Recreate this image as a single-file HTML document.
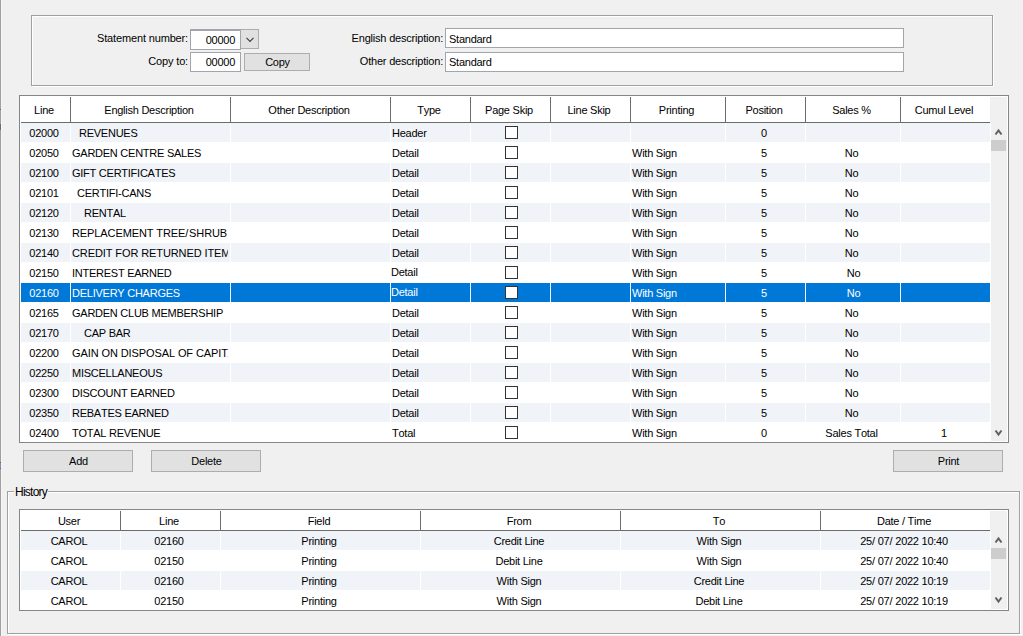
<!DOCTYPE html>
<html><head><meta charset="utf-8"><style>
html,body{margin:0;padding:0}
body{width:1023px;height:636px;overflow:hidden;position:relative;background:#f0f0f0;font-family:"Liberation Sans",sans-serif;font-size:11px}
.t{position:absolute;white-space:nowrap;line-height:13px;letter-spacing:-0.25px;font-kerning:none}
.g{display:inline-block;width:3px}
</style></head><body>
<div style="position:absolute;left:0px;top:0px;width:1px;height:636px;background:#a0a0a0"></div>
<div style="position:absolute;left:1px;top:0px;width:1px;height:636px;background:#f6f6f6"></div>
<div style="position:absolute;left:0px;top:109px;width:1px;height:1px;background:#3d6fae"></div>
<div style="position:absolute;left:0px;top:124px;width:1px;height:6px;background:#7a6274"></div>
<div style="position:absolute;left:0px;top:462px;width:1px;height:1px;background:#8a5050"></div>
<div style="position:absolute;left:0px;top:463px;width:1px;height:5px;background:#6f94b4"></div>
<div style="position:absolute;left:0px;top:468px;width:1px;height:1px;background:#8a5050"></div>
<div style="position:absolute;left:32px;top:16px;width:962px;height:71px;box-sizing:border-box;border:1px solid #fff"></div>
<div style="position:absolute;left:31px;top:15px;width:962px;height:71px;box-sizing:border-box;border:1px solid #a0a0a0"></div>
<div class="t" style="left:-112px;width:300px;text-align:right;top:32px;color:#000;letter-spacing:-0.15px">Statement number:</div>
<div class="t" style="left:-112px;width:300px;text-align:right;top:55px;color:#000;letter-spacing:-0.15px">Copy to:</div>
<div style="position:absolute;left:190px;top:29px;width:69px;height:20px;box-sizing:border-box;border:1px solid #adadad;background:#e1e1e1"></div>
<div style="position:absolute;left:190px;top:29px;width:51px;height:21px;box-sizing:border-box;border:1px solid #a2a5ab;border-top-width:2px;background:#fff"></div>
<div class="t" style="left:-65px;width:300px;text-align:right;top:34px;color:#000;">00000</div>
<svg style="position:absolute;left:241px;top:29px" width="18" height="20"><path d="M5.5 8.8 L9 12.3 L12.5 8.8" fill="none" stroke="#404040" stroke-width="1.2"/></svg>
<div style="position:absolute;left:190px;top:52px;width:51px;height:20px;box-sizing:border-box;border:1px solid #a2a5ab;background:#fff"></div>
<div class="t" style="left:-65px;width:300px;text-align:right;top:56px;color:#000;">00000</div>
<div style="position:absolute;left:244px;top:53px;width:66px;height:18px;box-sizing:border-box;border:1px solid #adadad;background:#e1e1e1"></div>
<div class="t" style="left:244.5px;width:66px;text-align:center;top:56px;color:#000;">Copy</div>
<div class="t" style="left:143px;width:300px;text-align:right;top:32px;color:#000;letter-spacing:-0.2px">English description:</div>
<div class="t" style="left:143px;width:300px;text-align:right;top:55px;color:#000;letter-spacing:-0.2px">Other description:</div>
<div style="position:absolute;left:445px;top:28px;width:459px;height:20px;box-sizing:border-box;border:1px solid #a2a5ab;background:#fff"></div>
<div class="t" style="left:449px;top:33px;color:#000;">Standard</div>
<div style="position:absolute;left:445px;top:52px;width:459px;height:20px;box-sizing:border-box;border:1px solid #a2a5ab;background:#fff"></div>
<div class="t" style="left:449px;top:56px;color:#000;">Standard</div>
<div style="position:absolute;left:19px;top:95px;width:990px;height:348px;box-sizing:border-box;border:1px solid #858585;background:#fff"></div>
<div style="position:absolute;left:990px;top:97px;width:17px;height:26px;background:#f0f0f0"></div>
<div style="position:absolute;left:991px;top:123px;width:16px;height:318px;background:#f0f0f0"></div>
<div style="position:absolute;left:70px;top:97px;width:1px;height:26px;background:#6d6d6d"></div>
<div class="t" style="left:19.5px;width:49px;text-align:center;top:104px;color:#000;">Line</div>
<div style="position:absolute;left:230px;top:97px;width:1px;height:26px;background:#6d6d6d"></div>
<div class="t" style="left:69.5px;width:159px;text-align:center;top:104px;color:#000;">English Description</div>
<div style="position:absolute;left:390px;top:97px;width:1px;height:26px;background:#6d6d6d"></div>
<div class="t" style="left:229.5px;width:159px;text-align:center;top:104px;color:#000;">Other Description</div>
<div style="position:absolute;left:470px;top:97px;width:1px;height:26px;background:#6d6d6d"></div>
<div class="t" style="left:389.5px;width:79px;text-align:center;top:104px;color:#000;">Type</div>
<div style="position:absolute;left:550px;top:97px;width:1px;height:26px;background:#6d6d6d"></div>
<div class="t" style="left:469.5px;width:79px;text-align:center;top:104px;color:#000;">Page Skip</div>
<div style="position:absolute;left:630px;top:97px;width:1px;height:26px;background:#6d6d6d"></div>
<div class="t" style="left:549.5px;width:79px;text-align:center;top:104px;color:#000;">Line Skip</div>
<div style="position:absolute;left:725px;top:97px;width:1px;height:26px;background:#6d6d6d"></div>
<div class="t" style="left:629.5px;width:94px;text-align:center;top:104px;color:#000;">Printing</div>
<div style="position:absolute;left:805px;top:97px;width:1px;height:26px;background:#6d6d6d"></div>
<div class="t" style="left:724.5px;width:79px;text-align:center;top:104px;color:#000;">Position</div>
<div style="position:absolute;left:900px;top:97px;width:1px;height:26px;background:#6d6d6d"></div>
<div class="t" style="left:804.5px;width:94px;text-align:center;top:104px;color:#000;">Sales %</div>
<div class="t" style="left:899.5px;width:89px;text-align:center;top:104px;color:#000;">Cumul Level</div>
<div style="position:absolute;left:21px;top:122px;width:969px;height:1px;background:#6d6d6d"></div>
<div style="position:absolute;left:21px;top:123px;width:49px;height:19px;background:#f0f3f8"></div>
<div style="position:absolute;left:71px;top:123px;width:159px;height:19px;background:#f0f3f8"></div>
<div style="position:absolute;left:231px;top:123px;width:159px;height:19px;background:#f0f3f8"></div>
<div style="position:absolute;left:391px;top:123px;width:79px;height:19px;background:#f0f3f8"></div>
<div style="position:absolute;left:471px;top:123px;width:79px;height:19px;background:#f0f3f8"></div>
<div style="position:absolute;left:551px;top:123px;width:79px;height:19px;background:#f0f3f8"></div>
<div style="position:absolute;left:631px;top:123px;width:94px;height:19px;background:#f0f3f8"></div>
<div style="position:absolute;left:726px;top:123px;width:79px;height:19px;background:#f0f3f8"></div>
<div style="position:absolute;left:806px;top:123px;width:94px;height:19px;background:#f0f3f8"></div>
<div style="position:absolute;left:901px;top:123px;width:89px;height:19px;background:#f0f3f8"></div>
<div class="t" style="left:19.5px;width:49px;text-align:center;top:127px;color:#000;">02000</div>
<div class="t" style="left:72px;width:156px;overflow:hidden;top:127px;color:#000;"><span style="padding-left:7px">REVENUES</span></div>
<div class="t" style="left:392px;width:76px;overflow:hidden;top:127px;color:#000;"><span style="padding-left:0px">Header</span></div>
<div style="position:absolute;left:505px;top:126px;width:13px;height:13px;box-sizing:border-box;border:1px solid #333;background:#fff"></div>
<div class="t" style="left:724.5px;width:79px;text-align:center;top:127px;color:#000;">0</div>
<div class="t" style="left:19.5px;width:49px;text-align:center;top:147px;color:#000;">02050</div>
<div class="t" style="left:72px;width:156px;overflow:hidden;top:147px;color:#000;"><span style="padding-left:0px">GARDEN CENTRE SALES</span></div>
<div class="t" style="left:392px;width:76px;overflow:hidden;top:147px;color:#000;"><span style="padding-left:0px">Detail</span></div>
<div style="position:absolute;left:505px;top:146px;width:13px;height:13px;box-sizing:border-box;border:1px solid #333;background:#fff"></div>
<div class="t" style="left:632px;width:91px;overflow:hidden;top:147px;color:#000;"><span style="padding-left:0px">With Sign</span></div>
<div class="t" style="left:724.5px;width:79px;text-align:center;top:147px;color:#000;">5</div>
<div class="t" style="left:804.5px;width:94px;text-align:center;top:147px;color:#000;">No</div>
<div style="position:absolute;left:21px;top:163px;width:49px;height:19px;background:#f0f3f8"></div>
<div style="position:absolute;left:71px;top:163px;width:159px;height:19px;background:#f0f3f8"></div>
<div style="position:absolute;left:231px;top:163px;width:159px;height:19px;background:#f0f3f8"></div>
<div style="position:absolute;left:391px;top:163px;width:79px;height:19px;background:#f0f3f8"></div>
<div style="position:absolute;left:471px;top:163px;width:79px;height:19px;background:#f0f3f8"></div>
<div style="position:absolute;left:551px;top:163px;width:79px;height:19px;background:#f0f3f8"></div>
<div style="position:absolute;left:631px;top:163px;width:94px;height:19px;background:#f0f3f8"></div>
<div style="position:absolute;left:726px;top:163px;width:79px;height:19px;background:#f0f3f8"></div>
<div style="position:absolute;left:806px;top:163px;width:94px;height:19px;background:#f0f3f8"></div>
<div style="position:absolute;left:901px;top:163px;width:89px;height:19px;background:#f0f3f8"></div>
<div class="t" style="left:19.5px;width:49px;text-align:center;top:167px;color:#000;">02100</div>
<div class="t" style="left:72px;width:156px;overflow:hidden;top:167px;color:#000;"><span style="padding-left:0px">GIFT CERTIFICATES</span></div>
<div class="t" style="left:392px;width:76px;overflow:hidden;top:167px;color:#000;"><span style="padding-left:0px">Detail</span></div>
<div style="position:absolute;left:505px;top:166px;width:13px;height:13px;box-sizing:border-box;border:1px solid #333;background:#fff"></div>
<div class="t" style="left:632px;width:91px;overflow:hidden;top:167px;color:#000;"><span style="padding-left:0px">With Sign</span></div>
<div class="t" style="left:724.5px;width:79px;text-align:center;top:167px;color:#000;">5</div>
<div class="t" style="left:804.5px;width:94px;text-align:center;top:167px;color:#000;">No</div>
<div class="t" style="left:19.5px;width:49px;text-align:center;top:187px;color:#000;">02101</div>
<div class="t" style="left:72px;width:156px;overflow:hidden;top:187px;color:#000;"><span style="padding-left:5px">CERTIFI-CANS</span></div>
<div class="t" style="left:392px;width:76px;overflow:hidden;top:187px;color:#000;"><span style="padding-left:0px">Detail</span></div>
<div style="position:absolute;left:505px;top:186px;width:13px;height:13px;box-sizing:border-box;border:1px solid #333;background:#fff"></div>
<div class="t" style="left:632px;width:91px;overflow:hidden;top:187px;color:#000;"><span style="padding-left:0px">With Sign</span></div>
<div class="t" style="left:724.5px;width:79px;text-align:center;top:187px;color:#000;">5</div>
<div class="t" style="left:804.5px;width:94px;text-align:center;top:187px;color:#000;">No</div>
<div style="position:absolute;left:21px;top:203px;width:49px;height:19px;background:#f0f3f8"></div>
<div style="position:absolute;left:71px;top:203px;width:159px;height:19px;background:#f0f3f8"></div>
<div style="position:absolute;left:231px;top:203px;width:159px;height:19px;background:#f0f3f8"></div>
<div style="position:absolute;left:391px;top:203px;width:79px;height:19px;background:#f0f3f8"></div>
<div style="position:absolute;left:471px;top:203px;width:79px;height:19px;background:#f0f3f8"></div>
<div style="position:absolute;left:551px;top:203px;width:79px;height:19px;background:#f0f3f8"></div>
<div style="position:absolute;left:631px;top:203px;width:94px;height:19px;background:#f0f3f8"></div>
<div style="position:absolute;left:726px;top:203px;width:79px;height:19px;background:#f0f3f8"></div>
<div style="position:absolute;left:806px;top:203px;width:94px;height:19px;background:#f0f3f8"></div>
<div style="position:absolute;left:901px;top:203px;width:89px;height:19px;background:#f0f3f8"></div>
<div class="t" style="left:19.5px;width:49px;text-align:center;top:207px;color:#000;">02120</div>
<div class="t" style="left:72px;width:156px;overflow:hidden;top:207px;color:#000;"><span style="padding-left:12px">RENTAL</span></div>
<div class="t" style="left:392px;width:76px;overflow:hidden;top:207px;color:#000;"><span style="padding-left:0px">Detail</span></div>
<div style="position:absolute;left:505px;top:206px;width:13px;height:13px;box-sizing:border-box;border:1px solid #333;background:#fff"></div>
<div class="t" style="left:632px;width:91px;overflow:hidden;top:207px;color:#000;"><span style="padding-left:0px">With Sign</span></div>
<div class="t" style="left:724.5px;width:79px;text-align:center;top:207px;color:#000;">5</div>
<div class="t" style="left:804.5px;width:94px;text-align:center;top:207px;color:#000;">No</div>
<div class="t" style="left:19.5px;width:49px;text-align:center;top:227px;color:#000;">02130</div>
<div class="t" style="left:72px;width:156px;overflow:hidden;top:227px;color:#000;letter-spacing:-0.1px;"><span style="padding-left:0px">REPLACEMENT TREE/&#8202;SHRUB</span></div>
<div class="t" style="left:392px;width:76px;overflow:hidden;top:227px;color:#000;"><span style="padding-left:0px">Detail</span></div>
<div style="position:absolute;left:505px;top:226px;width:13px;height:13px;box-sizing:border-box;border:1px solid #333;background:#fff"></div>
<div class="t" style="left:632px;width:91px;overflow:hidden;top:227px;color:#000;"><span style="padding-left:0px">With Sign</span></div>
<div class="t" style="left:724.5px;width:79px;text-align:center;top:227px;color:#000;">5</div>
<div class="t" style="left:804.5px;width:94px;text-align:center;top:227px;color:#000;">No</div>
<div style="position:absolute;left:21px;top:243px;width:49px;height:19px;background:#f0f3f8"></div>
<div style="position:absolute;left:71px;top:243px;width:159px;height:19px;background:#f0f3f8"></div>
<div style="position:absolute;left:231px;top:243px;width:159px;height:19px;background:#f0f3f8"></div>
<div style="position:absolute;left:391px;top:243px;width:79px;height:19px;background:#f0f3f8"></div>
<div style="position:absolute;left:471px;top:243px;width:79px;height:19px;background:#f0f3f8"></div>
<div style="position:absolute;left:551px;top:243px;width:79px;height:19px;background:#f0f3f8"></div>
<div style="position:absolute;left:631px;top:243px;width:94px;height:19px;background:#f0f3f8"></div>
<div style="position:absolute;left:726px;top:243px;width:79px;height:19px;background:#f0f3f8"></div>
<div style="position:absolute;left:806px;top:243px;width:94px;height:19px;background:#f0f3f8"></div>
<div style="position:absolute;left:901px;top:243px;width:89px;height:19px;background:#f0f3f8"></div>
<div class="t" style="left:19.5px;width:49px;text-align:center;top:247px;color:#000;">02140</div>
<div class="t" style="left:72px;width:156px;overflow:hidden;top:247px;color:#000;letter-spacing:-0.1px;"><span style="padding-left:0px">CREDIT FOR RETURNED ITEM</span></div>
<div class="t" style="left:392px;width:76px;overflow:hidden;top:247px;color:#000;"><span style="padding-left:0px">Detail</span></div>
<div style="position:absolute;left:505px;top:246px;width:13px;height:13px;box-sizing:border-box;border:1px solid #333;background:#fff"></div>
<div class="t" style="left:632px;width:91px;overflow:hidden;top:247px;color:#000;"><span style="padding-left:0px">With Sign</span></div>
<div class="t" style="left:724.5px;width:79px;text-align:center;top:247px;color:#000;">5</div>
<div class="t" style="left:804.5px;width:94px;text-align:center;top:247px;color:#000;">No</div>
<div class="t" style="left:19.5px;width:49px;text-align:center;top:267px;color:#000;">02150</div>
<div class="t" style="left:72px;width:156px;overflow:hidden;top:267px;color:#000;"><span style="padding-left:0px">INTEREST EARNED</span></div>
<div class="t" style="left:391px;width:76px;overflow:hidden;top:266px;color:#000;"><span style="padding-left:0px">Detail</span></div>
<div style="position:absolute;left:505px;top:266px;width:13px;height:13px;box-sizing:border-box;border:1px solid #333;background:#fff"></div>
<div class="t" style="left:632px;width:91px;overflow:hidden;top:267px;color:#000;"><span style="padding-left:0px">With Sign</span></div>
<div class="t" style="left:724.5px;width:79px;text-align:center;top:267px;color:#000;">5</div>
<div class="t" style="left:806.5px;width:94px;text-align:center;top:267px;color:#000;">No</div>
<div style="position:absolute;left:21px;top:283px;width:49px;height:19px;background:#0078d7"></div>
<div style="position:absolute;left:71px;top:283px;width:159px;height:19px;background:#0078d7"></div>
<div style="position:absolute;left:231px;top:283px;width:159px;height:19px;background:#0078d7"></div>
<div style="position:absolute;left:391px;top:283px;width:79px;height:19px;background:#0078d7"></div>
<div style="position:absolute;left:471px;top:283px;width:79px;height:19px;background:#0078d7"></div>
<div style="position:absolute;left:551px;top:283px;width:79px;height:19px;background:#0078d7"></div>
<div style="position:absolute;left:631px;top:283px;width:94px;height:19px;background:#0078d7"></div>
<div style="position:absolute;left:726px;top:283px;width:79px;height:19px;background:#0078d7"></div>
<div style="position:absolute;left:806px;top:283px;width:94px;height:19px;background:#0078d7"></div>
<div style="position:absolute;left:901px;top:283px;width:89px;height:19px;background:#0078d7"></div>
<div class="t" style="left:19.5px;width:49px;text-align:center;top:287px;color:#fff;">02160</div>
<div class="t" style="left:72px;width:156px;overflow:hidden;top:287px;color:#fff;"><span style="padding-left:0px">DELIVERY CHARGES</span></div>
<div class="t" style="left:391px;width:76px;overflow:hidden;top:286px;color:#fff;"><span style="padding-left:0px">Detail</span></div>
<div style="position:absolute;left:505px;top:286px;width:13px;height:13px;box-sizing:border-box;border:1px solid #333;background:#fff"></div>
<div class="t" style="left:632px;width:91px;overflow:hidden;top:287px;color:#fff;"><span style="padding-left:0px">With Sign</span></div>
<div class="t" style="left:724.5px;width:79px;text-align:center;top:287px;color:#fff;">5</div>
<div class="t" style="left:806.5px;width:94px;text-align:center;top:287px;color:#fff;">No</div>
<div class="t" style="left:19.5px;width:49px;text-align:center;top:307px;color:#000;">02165</div>
<div class="t" style="left:72px;width:156px;overflow:hidden;top:307px;color:#000;"><span style="padding-left:0px">GARDEN CLUB MEMBERSHIP</span></div>
<div class="t" style="left:392px;width:76px;overflow:hidden;top:307px;color:#000;"><span style="padding-left:0px">Detail</span></div>
<div style="position:absolute;left:505px;top:306px;width:13px;height:13px;box-sizing:border-box;border:1px solid #333;background:#fff"></div>
<div class="t" style="left:632px;width:91px;overflow:hidden;top:307px;color:#000;"><span style="padding-left:0px">With Sign</span></div>
<div class="t" style="left:724.5px;width:79px;text-align:center;top:307px;color:#000;">5</div>
<div class="t" style="left:804.5px;width:94px;text-align:center;top:307px;color:#000;">No</div>
<div style="position:absolute;left:21px;top:323px;width:49px;height:19px;background:#f0f3f8"></div>
<div style="position:absolute;left:71px;top:323px;width:159px;height:19px;background:#f0f3f8"></div>
<div style="position:absolute;left:231px;top:323px;width:159px;height:19px;background:#f0f3f8"></div>
<div style="position:absolute;left:391px;top:323px;width:79px;height:19px;background:#f0f3f8"></div>
<div style="position:absolute;left:471px;top:323px;width:79px;height:19px;background:#f0f3f8"></div>
<div style="position:absolute;left:551px;top:323px;width:79px;height:19px;background:#f0f3f8"></div>
<div style="position:absolute;left:631px;top:323px;width:94px;height:19px;background:#f0f3f8"></div>
<div style="position:absolute;left:726px;top:323px;width:79px;height:19px;background:#f0f3f8"></div>
<div style="position:absolute;left:806px;top:323px;width:94px;height:19px;background:#f0f3f8"></div>
<div style="position:absolute;left:901px;top:323px;width:89px;height:19px;background:#f0f3f8"></div>
<div class="t" style="left:19.5px;width:49px;text-align:center;top:327px;color:#000;">02170</div>
<div class="t" style="left:72px;width:156px;overflow:hidden;top:327px;color:#000;"><span style="padding-left:12px">CAP BAR</span></div>
<div class="t" style="left:392px;width:76px;overflow:hidden;top:327px;color:#000;"><span style="padding-left:0px">Detail</span></div>
<div style="position:absolute;left:505px;top:326px;width:13px;height:13px;box-sizing:border-box;border:1px solid #333;background:#fff"></div>
<div class="t" style="left:632px;width:91px;overflow:hidden;top:327px;color:#000;"><span style="padding-left:0px">With Sign</span></div>
<div class="t" style="left:724.5px;width:79px;text-align:center;top:327px;color:#000;">5</div>
<div class="t" style="left:804.5px;width:94px;text-align:center;top:327px;color:#000;">No</div>
<div class="t" style="left:19.5px;width:49px;text-align:center;top:347px;color:#000;">02200</div>
<div class="t" style="left:72px;width:156px;overflow:hidden;top:347px;color:#000;letter-spacing:-0.1px;"><span style="padding-left:0px">GAIN ON DISPOSAL OF CAPITAL</span></div>
<div class="t" style="left:392px;width:76px;overflow:hidden;top:347px;color:#000;"><span style="padding-left:0px">Detail</span></div>
<div style="position:absolute;left:505px;top:346px;width:13px;height:13px;box-sizing:border-box;border:1px solid #333;background:#fff"></div>
<div class="t" style="left:632px;width:91px;overflow:hidden;top:347px;color:#000;"><span style="padding-left:0px">With Sign</span></div>
<div class="t" style="left:724.5px;width:79px;text-align:center;top:347px;color:#000;">5</div>
<div class="t" style="left:804.5px;width:94px;text-align:center;top:347px;color:#000;">No</div>
<div style="position:absolute;left:21px;top:363px;width:49px;height:19px;background:#f0f3f8"></div>
<div style="position:absolute;left:71px;top:363px;width:159px;height:19px;background:#f0f3f8"></div>
<div style="position:absolute;left:231px;top:363px;width:159px;height:19px;background:#f0f3f8"></div>
<div style="position:absolute;left:391px;top:363px;width:79px;height:19px;background:#f0f3f8"></div>
<div style="position:absolute;left:471px;top:363px;width:79px;height:19px;background:#f0f3f8"></div>
<div style="position:absolute;left:551px;top:363px;width:79px;height:19px;background:#f0f3f8"></div>
<div style="position:absolute;left:631px;top:363px;width:94px;height:19px;background:#f0f3f8"></div>
<div style="position:absolute;left:726px;top:363px;width:79px;height:19px;background:#f0f3f8"></div>
<div style="position:absolute;left:806px;top:363px;width:94px;height:19px;background:#f0f3f8"></div>
<div style="position:absolute;left:901px;top:363px;width:89px;height:19px;background:#f0f3f8"></div>
<div class="t" style="left:19.5px;width:49px;text-align:center;top:367px;color:#000;">02250</div>
<div class="t" style="left:72px;width:156px;overflow:hidden;top:367px;color:#000;"><span style="padding-left:0px">MISCELLANEOUS</span></div>
<div class="t" style="left:392px;width:76px;overflow:hidden;top:367px;color:#000;"><span style="padding-left:0px">Detail</span></div>
<div style="position:absolute;left:505px;top:366px;width:13px;height:13px;box-sizing:border-box;border:1px solid #333;background:#fff"></div>
<div class="t" style="left:632px;width:91px;overflow:hidden;top:367px;color:#000;"><span style="padding-left:0px">With Sign</span></div>
<div class="t" style="left:724.5px;width:79px;text-align:center;top:367px;color:#000;">5</div>
<div class="t" style="left:804.5px;width:94px;text-align:center;top:367px;color:#000;">No</div>
<div class="t" style="left:19.5px;width:49px;text-align:center;top:387px;color:#000;">02300</div>
<div class="t" style="left:72px;width:156px;overflow:hidden;top:387px;color:#000;"><span style="padding-left:0px">DISCOUNT EARNED</span></div>
<div class="t" style="left:392px;width:76px;overflow:hidden;top:387px;color:#000;"><span style="padding-left:0px">Detail</span></div>
<div style="position:absolute;left:505px;top:386px;width:13px;height:13px;box-sizing:border-box;border:1px solid #333;background:#fff"></div>
<div class="t" style="left:632px;width:91px;overflow:hidden;top:387px;color:#000;"><span style="padding-left:0px">With Sign</span></div>
<div class="t" style="left:724.5px;width:79px;text-align:center;top:387px;color:#000;">5</div>
<div class="t" style="left:804.5px;width:94px;text-align:center;top:387px;color:#000;">No</div>
<div style="position:absolute;left:21px;top:403px;width:49px;height:19px;background:#f0f3f8"></div>
<div style="position:absolute;left:71px;top:403px;width:159px;height:19px;background:#f0f3f8"></div>
<div style="position:absolute;left:231px;top:403px;width:159px;height:19px;background:#f0f3f8"></div>
<div style="position:absolute;left:391px;top:403px;width:79px;height:19px;background:#f0f3f8"></div>
<div style="position:absolute;left:471px;top:403px;width:79px;height:19px;background:#f0f3f8"></div>
<div style="position:absolute;left:551px;top:403px;width:79px;height:19px;background:#f0f3f8"></div>
<div style="position:absolute;left:631px;top:403px;width:94px;height:19px;background:#f0f3f8"></div>
<div style="position:absolute;left:726px;top:403px;width:79px;height:19px;background:#f0f3f8"></div>
<div style="position:absolute;left:806px;top:403px;width:94px;height:19px;background:#f0f3f8"></div>
<div style="position:absolute;left:901px;top:403px;width:89px;height:19px;background:#f0f3f8"></div>
<div class="t" style="left:19.5px;width:49px;text-align:center;top:407px;color:#000;">02350</div>
<div class="t" style="left:72px;width:156px;overflow:hidden;top:407px;color:#000;"><span style="padding-left:0px">REBATES EARNED</span></div>
<div class="t" style="left:392px;width:76px;overflow:hidden;top:407px;color:#000;"><span style="padding-left:0px">Detail</span></div>
<div style="position:absolute;left:505px;top:406px;width:13px;height:13px;box-sizing:border-box;border:1px solid #333;background:#fff"></div>
<div class="t" style="left:632px;width:91px;overflow:hidden;top:407px;color:#000;"><span style="padding-left:0px">With Sign</span></div>
<div class="t" style="left:724.5px;width:79px;text-align:center;top:407px;color:#000;">5</div>
<div class="t" style="left:804.5px;width:94px;text-align:center;top:407px;color:#000;">No</div>
<div class="t" style="left:19.5px;width:49px;text-align:center;top:427px;color:#000;">02400</div>
<div class="t" style="left:72px;width:156px;overflow:hidden;top:427px;color:#000;"><span style="padding-left:0px">TOTAL REVENUE</span></div>
<div class="t" style="left:392px;width:76px;overflow:hidden;top:427px;color:#000;"><span style="padding-left:0px">Total</span></div>
<div style="position:absolute;left:505px;top:426px;width:13px;height:13px;box-sizing:border-box;border:1px solid #333;background:#fff"></div>
<div class="t" style="left:632px;width:91px;overflow:hidden;top:427px;color:#000;"><span style="padding-left:0px">With Sign</span></div>
<div class="t" style="left:724.5px;width:79px;text-align:center;top:427px;color:#000;">0</div>
<div class="t" style="left:804.5px;width:94px;text-align:center;top:427px;color:#000;">Sales Total</div>
<div class="t" style="left:899.5px;width:89px;text-align:center;top:427px;color:#000;">1</div>
<svg style="position:absolute;left:0;top:0" width="1023" height="636"><path d="M995.5 134.5 L998.5 130.5 L1001.5 134.5" fill="none" stroke="#606060" stroke-width="2"/></svg>
<div style="position:absolute;left:991px;top:140px;width:15px;height:11px;background:#cdcdcd"></div>
<svg style="position:absolute;left:0;top:0" width="1023" height="636"><path d="M995.5 430.5 L998.5 434.5 L1001.5 430.5" fill="none" stroke="#606060" stroke-width="2"/></svg>
<div style="position:absolute;left:23px;top:450px;width:110px;height:22px;box-sizing:border-box;border:1px solid #adadad;background:#e1e1e1"></div>
<div class="t" style="left:23.5px;width:110px;text-align:center;top:455px;color:#000;">Add</div>
<div style="position:absolute;left:151px;top:450px;width:110px;height:22px;box-sizing:border-box;border:1px solid #adadad;background:#e1e1e1"></div>
<div class="t" style="left:151.5px;width:110px;text-align:center;top:455px;color:#000;">Delete</div>
<div style="position:absolute;left:893px;top:450px;width:110px;height:22px;box-sizing:border-box;border:1px solid #adadad;background:#e1e1e1"></div>
<div class="t" style="left:893.5px;width:110px;text-align:center;top:455px;color:#000;">Print</div>
<div style="position:absolute;left:8px;top:492px;width:1013px;height:143px;box-sizing:border-box;border:1px solid #fff"></div>
<div style="position:absolute;left:7px;top:491px;width:1013px;height:143px;box-sizing:border-box;border:1px solid #a0a0a0"></div>
<div style="position:absolute;left:14px;top:484px;width:34px;height:14px;background:#f0f0f0"></div>
<div class="t" style="left:15px;top:486px;color:#000;font-size:12px;letter-spacing:-0.75px">History</div>
<div style="position:absolute;left:19px;top:509px;width:990px;height:102px;box-sizing:border-box;border:1px solid #858585;background:#fff"></div>
<div style="position:absolute;left:990px;top:511px;width:17px;height:20px;background:#f0f0f0"></div>
<div style="position:absolute;left:991px;top:531px;width:16px;height:78px;background:#f0f0f0"></div>
<div style="position:absolute;left:120px;top:511px;width:1px;height:20px;background:#6d6d6d"></div>
<div class="t" style="left:19.5px;width:99px;text-align:center;top:515px;color:#000;">User</div>
<div style="position:absolute;left:220px;top:511px;width:1px;height:20px;background:#6d6d6d"></div>
<div class="t" style="left:119.5px;width:99px;text-align:center;top:515px;color:#000;">Line</div>
<div style="position:absolute;left:420px;top:511px;width:1px;height:20px;background:#6d6d6d"></div>
<div class="t" style="left:219.5px;width:199px;text-align:center;top:515px;color:#000;">Field</div>
<div style="position:absolute;left:620px;top:511px;width:1px;height:20px;background:#6d6d6d"></div>
<div class="t" style="left:419.5px;width:199px;text-align:center;top:515px;color:#000;">From</div>
<div style="position:absolute;left:820px;top:511px;width:1px;height:20px;background:#6d6d6d"></div>
<div class="t" style="left:619.5px;width:199px;text-align:center;top:515px;color:#000;">To</div>
<div class="t" style="left:819.5px;width:169px;text-align:center;top:515px;color:#000;">Date / Time</div>
<div style="position:absolute;left:21px;top:530px;width:969px;height:1px;background:#6d6d6d"></div>
<div style="position:absolute;left:21px;top:531px;width:99px;height:19px;background:#f0f3f8"></div>
<div style="position:absolute;left:121px;top:531px;width:99px;height:19px;background:#f0f3f8"></div>
<div style="position:absolute;left:221px;top:531px;width:199px;height:19px;background:#f0f3f8"></div>
<div style="position:absolute;left:421px;top:531px;width:199px;height:19px;background:#f0f3f8"></div>
<div style="position:absolute;left:621px;top:531px;width:199px;height:19px;background:#f0f3f8"></div>
<div style="position:absolute;left:821px;top:531px;width:169px;height:19px;background:#f0f3f8"></div>
<div class="t" style="left:19.5px;width:99px;text-align:center;top:535px;color:#000;">CAROL</div>
<div class="t" style="left:119.5px;width:99px;text-align:center;top:535px;color:#000;">02160</div>
<div class="t" style="left:219.5px;width:199px;text-align:center;top:535px;color:#000;">Printing</div>
<div class="t" style="left:419.5px;width:199px;text-align:center;top:535px;color:#000;">Credit Line</div>
<div class="t" style="left:619.5px;width:199px;text-align:center;top:535px;color:#000;">With Sign</div>
<div class="t" style="left:819.5px;width:169px;text-align:center;top:535px;color:#000;">25/<i class=g></i>07/<i class=g></i>2022 10:40</div>
<div class="t" style="left:19.5px;width:99px;text-align:center;top:555px;color:#000;">CAROL</div>
<div class="t" style="left:119.5px;width:99px;text-align:center;top:555px;color:#000;">02150</div>
<div class="t" style="left:219.5px;width:199px;text-align:center;top:555px;color:#000;">Printing</div>
<div class="t" style="left:419.5px;width:199px;text-align:center;top:555px;color:#000;">Debit Line</div>
<div class="t" style="left:619.5px;width:199px;text-align:center;top:555px;color:#000;">With Sign</div>
<div class="t" style="left:819.5px;width:169px;text-align:center;top:555px;color:#000;">25/<i class=g></i>07/<i class=g></i>2022 10:40</div>
<div style="position:absolute;left:21px;top:571px;width:99px;height:19px;background:#f0f3f8"></div>
<div style="position:absolute;left:121px;top:571px;width:99px;height:19px;background:#f0f3f8"></div>
<div style="position:absolute;left:221px;top:571px;width:199px;height:19px;background:#f0f3f8"></div>
<div style="position:absolute;left:421px;top:571px;width:199px;height:19px;background:#f0f3f8"></div>
<div style="position:absolute;left:621px;top:571px;width:199px;height:19px;background:#f0f3f8"></div>
<div style="position:absolute;left:821px;top:571px;width:169px;height:19px;background:#f0f3f8"></div>
<div class="t" style="left:19.5px;width:99px;text-align:center;top:575px;color:#000;">CAROL</div>
<div class="t" style="left:119.5px;width:99px;text-align:center;top:575px;color:#000;">02160</div>
<div class="t" style="left:219.5px;width:199px;text-align:center;top:575px;color:#000;">Printing</div>
<div class="t" style="left:419.5px;width:199px;text-align:center;top:575px;color:#000;">With Sign</div>
<div class="t" style="left:619.5px;width:199px;text-align:center;top:575px;color:#000;">Credit Line</div>
<div class="t" style="left:819.5px;width:169px;text-align:center;top:575px;color:#000;">25/<i class=g></i>07/<i class=g></i>2022 10:19</div>
<div class="t" style="left:19.5px;width:99px;text-align:center;top:595px;color:#000;">CAROL</div>
<div class="t" style="left:119.5px;width:99px;text-align:center;top:595px;color:#000;">02150</div>
<div class="t" style="left:219.5px;width:199px;text-align:center;top:595px;color:#000;">Printing</div>
<div class="t" style="left:419.5px;width:199px;text-align:center;top:595px;color:#000;">With Sign</div>
<div class="t" style="left:619.5px;width:199px;text-align:center;top:595px;color:#000;">Debit Line</div>
<div class="t" style="left:819.5px;width:169px;text-align:center;top:595px;color:#000;">25/<i class=g></i>07/<i class=g></i>2022 10:19</div>
<svg style="position:absolute;left:0;top:0" width="1023" height="636"><path d="M995.5 542.5 L998.5 538.5 L1001.5 542.5" fill="none" stroke="#606060" stroke-width="2"/></svg>
<div style="position:absolute;left:991px;top:548px;width:15px;height:11px;background:#cdcdcd"></div>
<svg style="position:absolute;left:0;top:0" width="1023" height="636"><path d="M995.5 597.5 L998.5 601.5 L1001.5 597.5" fill="none" stroke="#606060" stroke-width="2"/></svg>
</body></html>
